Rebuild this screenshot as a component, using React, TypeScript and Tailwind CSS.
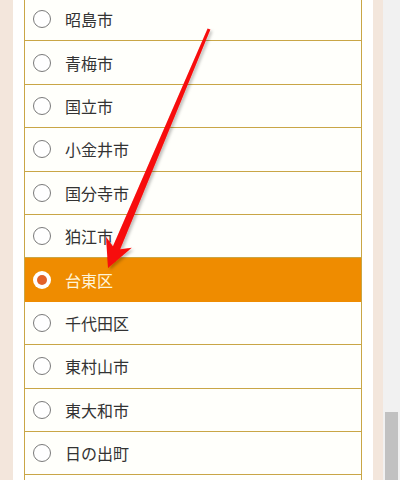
import React from "react";

const items = [
  "昭島市",
  "青梅市",
  "国立市",
  "小金井市",
  "国分寺市",
  "狛江市",
  "台東区",
  "千代田区",
  "東村山市",
  "東大和市",
  "日の出町",
  "",
];

function Arrow() {
  // tail (209,29) -> tip (108,268)
  const tail = { x: 209, y: 29 };
  const tip = { x: 108, y: 268 };
  const dx = tip.x - tail.x;
  const dy = tip.y - tail.y;
  const len = Math.hypot(dx, dy);
  const ux = dx / len;
  const uy = dy / len;
  const nx = -uy;
  const ny = ux;
  const headLen = 28;
  const headHalf = 14;
  const shaftTail = 1.5;
  const shaftHead = 4;
  const bx = tip.x - ux * headLen;
  const by = tip.y - uy * headLen;
  const sx = tip.x - ux * (headLen - 6);
  const sy = tip.y - uy * (headLen - 6);
  const p = (x: number, y: number) => `${x.toFixed(1)},${y.toFixed(1)}`;
  const pts = [
    p(tail.x + nx * shaftTail, tail.y + ny * shaftTail),
    p(sx + nx * shaftHead, sy + ny * shaftHead),
    p(bx + nx * headHalf, by + ny * headHalf),
    p(tip.x, tip.y),
    p(bx - nx * headHalf, by - ny * headHalf),
    p(sx - nx * shaftHead, sy - ny * shaftHead),
    p(tail.x - nx * shaftTail, tail.y - ny * shaftTail),
  ].join(" ");
  return (
    <svg
      className="absolute left-0 top-0 pointer-events-none"
      width="400"
      height="480"
      viewBox="0 0 400 480"
    >
      <defs>
        <filter id="sh" x="-20%" y="-20%" width="140%" height="140%">
          <feDropShadow dx="2" dy="2" stdDeviation="1.5" floodColor="#000" floodOpacity="0.25" />
        </filter>
      </defs>
      <polygon points={pts} fill="#f70a0a" filter="url(#sh)" strokeLinejoin="round" />
    </svg>
  );
}

export default function App() {
  return (
    <div
      className="relative w-[400px] h-[480px] overflow-hidden flex bg-white"
      style={{ fontFamily: '"Noto Sans CJK JP", "Noto Sans", sans-serif' }}
    >
      <div className="w-[13px] shrink-0 bg-[#f3e6dc]" />
      <div className="w-[360px] shrink-0 bg-white px-[11px]">
        <div className="-mt-[2px] border-x border-[#c9a646] bg-[#fffffb]">
          {items.map((t, i) => {
            const sel = t === "台東区";
            return (
              <div
                key={i}
                className={
                  sel
                    ? "h-[43.4px] flex items-center pl-[8px] bg-[#ef8c00] border-b border-[#ef8c00]"
                    : "h-[43.4px] flex items-center pl-[8px] border-b border-[#c9a646]"
                }
              >
                {sel ? (
                  <div className="w-[18px] h-[18px] rounded-full bg-white flex items-center justify-center">
                    <div className="w-[10px] h-[10px] rounded-full bg-[#e2622a]" />
                  </div>
                ) : (
                  <div className="w-[18px] h-[18px] rounded-full border border-[#7a7a7a] bg-white" />
                )}
                <span
                  className={
                    sel
                      ? "ml-[14px] text-[16px] text-[#fff4d8] leading-none"
                      : "ml-[14px] text-[16px] text-[#333333] leading-none"
                  }
                >
                  {t}
                </span>
              </div>
            );
          })}
        </div>
      </div>
      <div className="w-[10px] shrink-0 bg-[#f3e6dc]" />
      <div className="flex-1 bg-[#f1f1f1] pt-[412px] px-[2px]">
        <div className="h-[80px] bg-[#c1c1c1]" />
      </div>
      <Arrow />
    </div>
  );
}
